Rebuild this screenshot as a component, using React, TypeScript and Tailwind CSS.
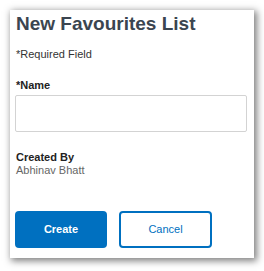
import React from "react";

const App: React.FC = () => {
  return (
    <div className="w-[264px] h-[271px] bg-white pt-[10px] pl-[10px] font-['Liberation_Sans',Arial,sans-serif]">
      <div className="w-[244px] h-[248px] bg-white shadow-[2px_2px_7px_1px_rgba(0,0,0,0.5)] pt-[3px] pl-[5px] pr-[7px]">
        {/* Title */}
        <h1 className="pl-[1px] text-[19px] leading-[22px] font-bold text-[#3b4550]">
          New Favourites List
        </h1>

        <p className="mt-[12px] pl-[1px] text-[11px] leading-[14px] text-[#333]">
          *Required Field
        </p>

        {/* Name field */}
        <label className="block mt-[17px] pl-[1px] text-[11px] leading-[14px] font-bold text-[#222]">
          *Name
        </label>
        <input
          type="text"
          className="mt-[3px] block w-[232px] h-[37px] border border-[#d3d3d3] rounded-[2px] bg-white outline-none"
        />

        {/* Created by */}
        <div className="mt-[19px] pl-[1px] text-[11px] leading-[13px] font-bold text-[#222]">
          Created By
        </div>
        <div className="pl-[1px] text-[11px] leading-[13px] text-[#666]">
          Abhinav Bhatt
        </div>

        {/* Actions */}
        <div className="mt-[34px] flex gap-[12px]">
          <button className="w-[92px] h-[37px] rounded-[4px] bg-[#0070c0] text-white text-[11px] font-bold">
            Create
          </button>
          <button className="w-[93px] h-[37px] rounded-[4px] border-2 border-[#0070c0] bg-white text-[#0070c0] text-[11px]">
            Cancel
          </button>
        </div>
      </div>
    </div>
  );
};

export default App;
